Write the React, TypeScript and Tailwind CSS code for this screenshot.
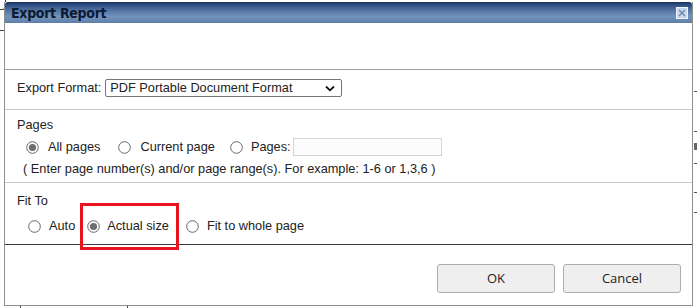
import React from "react";

function Radio({ checked = false }: { checked?: boolean }) {
  return (
    <svg width="13" height="13" viewBox="0 0 13 13" className="shrink-0">
      <circle cx="6.5" cy="6.5" r="5.8" fill="#fff" stroke="#666666" strokeWidth="1" />
      {checked && <circle cx="6.5" cy="6.5" r="3.6" fill="#6e6e6e" />}
    </svg>
  );
}

export default function App() {
  const font = { fontFamily: '"Liberation Sans", Arial, sans-serif' };
  return (
    <div className="relative w-[697px] h-[308px] bg-white overflow-hidden text-[12.75px] text-[#222]" style={font}>
      {/* background page remnants */}
      <div className="absolute left-0 top-[30px] w-[4px] h-px bg-[#444]" />
      <div className="absolute left-[0px] top-[0px] w-[6px] h-[10px] border-r border-b border-[#333] rounded-br-[4px]" />
      <div className="absolute left-[694px] top-[91px] w-[3px] h-px bg-[#555]" />
      <div className="absolute left-[694px] top-[131px] w-[3px] h-px bg-[#555]" />
      <div className="absolute left-[694px] top-[143px] w-[3px] h-[7px] bg-[#666]" />
      <div className="absolute left-[694px] top-[163px] w-[3px] h-px bg-[#555]" />
      <div className="absolute left-[694px] top-[192px] w-[3px] h-px bg-[#555]" />
      <div className="absolute left-[694px] top-[212px] w-[3px] h-px bg-[#555]" />
      <div className="absolute left-[20px] top-[306px] w-px h-[2px] bg-[#444]" />
      <div className="absolute left-[127px] top-[306px] w-px h-[2px] bg-[#444]" />

      {/* dialog */}
      <div className="absolute left-[4px] top-[2px] w-[689px] h-[304px] border-x border-b border-[#8e8e8e] bg-white flex flex-col">
        {/* title bar */}
        <div className="h-[21px] shrink-0 flex items-center justify-between pl-[6px] pr-[4px] bg-[linear-gradient(to_bottom,#1f4076_0%,#5878a6_40%,#7193bb_68%,#5f7fa9_100%)] border-t border-[#1d3256] rounded-tl-[3px] rounded-tr-[3px]">
          <span
            className="font-bold text-[14px] text-[#0c1a33] leading-none tracking-[-0.3px]"
            style={{ fontFamily: '"DejaVu Sans Condensed", "DejaVu Sans", sans-serif', fontStretch: "condensed" }}
          >
            Export Report
          </span>
          <svg width="12" height="12" viewBox="0 0 12 12">
            <rect x="0.5" y="0.5" width="11" height="11" fill="#c9d7ea" stroke="#eef3fa" />
            <path d="M3 3 L9 9 M9 3 L3 9" stroke="#6f88ab" strokeWidth="1.4" />
          </svg>
        </div>

        {/* empty area */}
        <div className="h-[47px] shrink-0 border-b border-[#9c9c9c]" />

        {/* export format */}
        <div className="h-[40px] shrink-0 border-b border-[#c8c8c8] flex items-start pt-[9px] pl-[12px]">
          <span className="leading-[18px] mr-[4px]">Export Format:</span>
          <div className="w-[237px] h-[18px] border border-[#767676] rounded-[2px] flex items-center justify-between pl-[4px] pr-[6px]">
            <span className="leading-none">PDF Portable Document Format</span>
            <svg width="10" height="7" viewBox="0 0 10 7">
              <path d="M1 1.5 L5 5.3 L9 1.5" fill="none" stroke="#111" strokeWidth="1.8" />
            </svg>
          </div>
        </div>

        {/* pages */}
        <div className="h-[73px] shrink-0 border-b border-[#c8c8c8] flex flex-col pl-[12px] pt-[7px]">
          <div className="leading-[15px]">Pages</div>
          <div className="flex items-center mt-[6px] pl-[9px] h-[18px]">
            <Radio checked />
            <span className="ml-[9px]">All pages</span>
            <span className="ml-[18px]"><Radio /></span>
            <span className="ml-[9px]">Current page</span>
            <span className="ml-[15px]"><Radio /></span>
            <span className="ml-[8px]">Pages:</span>
            <div className="ml-[2px] w-[149px] h-[18px] border border-[#d4d4d4] bg-[#fcfcfc]" />
          </div>
          <div className="mt-[5px] pl-[6px] leading-[15px]">( Enter page number(s) and/or page range(s). For example: 1-6 or 1,3,6 )</div>
        </div>

        {/* fit to */}
        <div className="relative h-[62px] shrink-0 border-b border-[#3a3a3a] flex flex-col pl-[12px] pt-[10px]">
          <div className="leading-[15px]">Fit To</div>
          <div className="flex items-center mt-[10px] pl-[11px] h-[16px]">
            <Radio />
            <span className="ml-[8px]">Auto</span>
            <span className="ml-[12px]"><Radio checked /></span>
            <span className="ml-[7px]">Actual size</span>
            <span className="ml-[17px]"><Radio /></span>
            <span className="ml-[8px]">Fit to whole page</span>
          </div>
          <div className="absolute left-[75px] top-[20px] w-[99px] h-[47px] border-[3px] border-[#e8131f]" />
        </div>

        {/* footer */}
        <div className="flex-1 flex items-start justify-end gap-[8px] pt-[19px] pr-[11px]" style={{ fontFamily: '"Open Sans", "Noto Sans", sans-serif' }}>
          <button className="w-[118px] h-[29px] border border-[#adadad] rounded-[3px] bg-[#efefef] text-[13px] text-[#222]">OK</button>
          <button className="w-[118px] h-[29px] border border-[#adadad] rounded-[3px] bg-[#efefef] text-[13px] text-[#222]">Cancel</button>
        </div>
      </div>
    </div>
  );
}
